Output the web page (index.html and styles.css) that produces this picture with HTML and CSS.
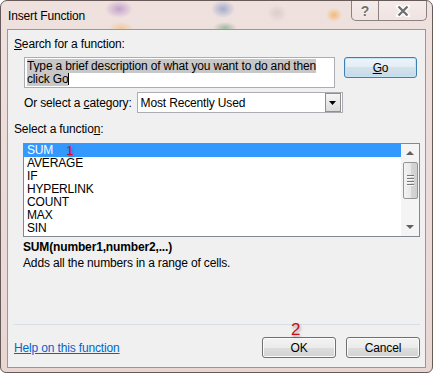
FILE: index.html
```html
<!DOCTYPE html>
<html lang="en">
<head>
    <meta charset="UTF-8">
    <title>Insert Function</title>
    <link rel="stylesheet" href="styles.css">
</head>
<body>
    <div class="window">
        <div class="titlebar">
            <span class="title">Insert Function</span>
            <div class="caption-buttons">
                <span class="cap-btn help">?</span>
                <span class="cap-btn close">
                    <svg width="14" height="12" viewBox="0 0 14 12">
                        <path d="M2 1 L12 11 M12 1 L2 11" stroke="#fff" stroke-width="5" stroke-linecap="round"/>
                        <path d="M2.5 1.5 L11.5 10.5 M11.5 1.5 L2.5 10.5" stroke="#707070" stroke-width="2.4"/>
                    </svg>
                </span>
            </div>
        </div>

        <div class="client">
            <div class="label"><u>S</u>earch for a function:</div>
            <div class="indent search-row">
                <div class="textbox">
                    <span class="sel">Type a brief description of what you want to do and then </span><br><span class="sel">click Go</span><span class="caret"></span>
                </div>
                <button class="btn default"><u>G</u>o</button>
            </div>
            <div class="indent category-row">
                <span>Or select a <u>c</u>ategory:</span>
                <div class="combo">
                    <span>Most Recently Used</span>
                    <span class="combo-arrow">
                        <svg width="7" height="4" viewBox="0 0 7 4"><path d="M0 0 H7 L3.5 4 Z" fill="#000"/></svg>
                    </span>
                </div>
            </div>

            <div class="label section">Select a functio<u>n</u>:</div>
            <div class="listbox">
                <ul class="items">
                    <li class="selected"><span>SUM</span><span class="mark mark-1">1</span></li>
                    <li>AVERAGE</li>
                    <li>IF</li>
                    <li>HYPERLINK</li>
                    <li>COUNT</li>
                    <li>MAX</li>
                    <li>SIN</li>
                </ul>
                <div class="scrollbar">
                    <span class="arrow up"></span>
                    <span class="thumb"><i></i><i></i><i></i><i></i></span>
                    <span class="arrow down"></span>
                </div>
            </div>

            <div class="signature">SUM(number1,number2,...)</div>
            <div class="desc">Adds all the numbers in a range of cells.</div>

            <div class="separator"></div>

            <div class="bottom-row">
                <a class="help-link" href="#">Help on this function</a>
                <div class="buttons">
                    <span class="mark mark-2">2</span>
                    <button class="btn">OK</button>
                    <button class="btn">Cancel</button>
                </div>
            </div>
        </div>
    </div>
</body>
</html>
```

FILE: styles.css
```css
body {
    margin: 0;
    background-color: #ffffff;
    font-family: "Liberation Sans", Arial, sans-serif;
    font-size: 12px;
    letter-spacing: -0.15px;
    color: #000;
}
.window {
    box-sizing: border-box;
    width: 433px;
    height: 373px;
    border: 1px solid #675b59;
    border-radius: 7px 7px 6px 6px;
    padding: 0 6px 4px 6px;
    display: flex;
    flex-direction: column;
    background:
        radial-gradient(ellipse 14px 9px at 118px 8px, rgba(160, 110, 190, 0.55), transparent),
        radial-gradient(ellipse 12px 6px at 120px 27px, rgba(240, 190, 110, 0.6), transparent),
        radial-gradient(ellipse 12px 9px at 222px 8px, rgba(100, 130, 190, 0.55), transparent),
        radial-gradient(ellipse 12px 6px at 224px 27px, rgba(110, 160, 120, 0.6), transparent),
        radial-gradient(ellipse 10px 9px at 276px 12px, rgba(170, 160, 160, 0.3), transparent),
        radial-gradient(ellipse 8px 7px at 333px 14px, rgba(245, 170, 70, 0.7), transparent),
        linear-gradient(#efe1de, #e8d6d3);
}
.titlebar {
    height: 28px;
    display: flex;
    align-items: center;
}
.title {
    padding-left: 1px;
    margin-top: 2px;
}
.caption-buttons {
    margin-left: auto;
    align-self: flex-start;
    display: flex;
    height: 19px;
    border: 1px solid #8c8180;
    border-top: none;
    border-radius: 0 0 5px 5px;
    background: linear-gradient(rgba(255, 255, 255, 0.35), rgba(255, 255, 255, 0.1));
    margin-right: -1px;
}
.cap-btn {
    display: flex;
    align-items: center;
    justify-content: center;
}
.help {
    width: 26px;
    border-right: 1px solid #8c8180;
    font-weight: bold;
    font-size: 14px;
    color: #707070;
    text-shadow: 0 0 2px #fff, 0 0 1px #fff;
}
.close {
    width: 47px;
}
.client {
    flex: 1;
    background-color: #f0f0f0;
    border: 1px solid #9c9696;
    padding: 0 5px 0 6px;
    display: flex;
    flex-direction: column;
}
.label {
    line-height: 14px;
    padding-top: 7px;
}
.indent {
    padding-left: 10px;
    display: flex;
    align-items: flex-start;
}
.search-row {
    margin-top: 6px;
    gap: 9px;
}
.textbox {
    box-sizing: border-box;
    width: 311px;
    height: 31px;
    background: #fff;
    border: 1px solid #abadb3;
    padding: 2px 2px 0 2px;
    line-height: 13px;
    white-space: nowrap;
}
.sel {
    background-color: #c7c7c7;
}
.caret {
    display: inline-block;
    width: 1px;
    height: 12px;
    background: #000;
    vertical-align: -2px;
}
.btn {
    box-sizing: border-box;
    width: 74px;
    height: 21px;
    padding: 0;
    border: 1px solid #707070;
    border-radius: 3px;
    background: linear-gradient(#f3f3f3 0%, #ebebeb 50%, #dedede 50%, #d2d2d2 100%);
    box-shadow: inset 0 0 0 1px #fbfbfb;
    font-family: inherit;
    font-size: 12px;
    letter-spacing: inherit;
    color: #000;
}
.btn.default {
    width: 73px;
    border-color: #3c7fb1;
    background: linear-gradient(#eef5fa 0%, #e2edf5 50%, #d3e2ed 50%, #c8dae7 100%);
    box-shadow: inset 0 0 0 1px #c4e5f6;
}
.category-row {
    margin-top: 4px;
    align-items: center;
    gap: 5px;
}
.combo {
    box-sizing: border-box;
    width: 206px;
    height: 21px;
    background: #fff;
    border: 1px solid #abadb3;
    display: flex;
    align-items: center;
    padding: 0 1px 0 3px;
}
.combo span:first-child {
    flex: 1;
}
.combo-arrow {
    box-sizing: border-box;
    width: 16px;
    height: 19px;
    border: 1px solid #8f8f8f;
    background: linear-gradient(#f5f5f5, #dcdcdc);
    display: flex;
    align-items: center;
    justify-content: center;
}
.section {
    padding-top: 9px;
}
.listbox {
    box-sizing: border-box;
    margin: 7px 0 0 9px;
    height: 94px;
    border: 1px solid #828790;
    background: #fff;
    display: flex;
}
.items {
    list-style: none;
    margin: 0;
    padding: 0;
    flex: 1;
}
.items li {
    height: 13px;
    line-height: 13px;
    padding-left: 3px;
}
.items li.selected {
    display: flex;
    align-items: center;
    background-color: #3399ff;
    color: #fff;
}
.mark {
    color: #c8101a;
    text-shadow: 1px 2px 3px rgba(0, 0, 0, 0.35);
}
.mark-1 {
    font-size: 13px;
    line-height: 11px;
    margin-left: 13px;
}
.scrollbar {
    width: 18px;
    background: #f4f4f4;
    display: flex;
    flex-direction: column;
    align-items: center;
}
.arrow {
    width: 0;
    height: 0;
    border-left: 4px solid transparent;
    border-right: 4px solid transparent;
}
.arrow.up {
    margin-top: 7px;
    border-bottom: 4px solid #606060;
}
.arrow.down {
    margin-top: auto;
    margin-bottom: 7px;
    border-top: 4px solid #606060;
}
.thumb {
    box-sizing: border-box;
    margin-top: 7px;
    width: 15px;
    height: 37px;
    border: 1px solid #959595;
    border-radius: 2px;
    background: linear-gradient(90deg, #f3f3f3, #e8e8e8 50%, #d6d6d6 51%, #cfcfcf);
    display: flex;
    flex-direction: column;
    justify-content: center;
    align-items: center;
    gap: 1px;
}
.thumb i {
    width: 7px;
    height: 1px;
    background: #777;
    border-bottom: 1px solid #f8f8f8;
}
.signature {
    font-weight: bold;
    margin: 3px 0 0 9px;
    line-height: 14px;
}
.desc {
    margin: 2px 0 0 9px;
    line-height: 14px;
}
.separator {
    margin-top: 54px;
    height: 1px;
    background: #d6dfe6;
}
.bottom-row {
    margin-top: 12px;
    display: flex;
    align-items: center;
}
.help-link {
    color: #0066cc;
    text-decoration: underline;
}
.buttons {
    margin-left: auto;
    display: flex;
    gap: 10px;
    position: relative;
}
.mark-2 {
    position: absolute;
    left: 29px;
    top: -17px;
    font-size: 17px;
}
```
